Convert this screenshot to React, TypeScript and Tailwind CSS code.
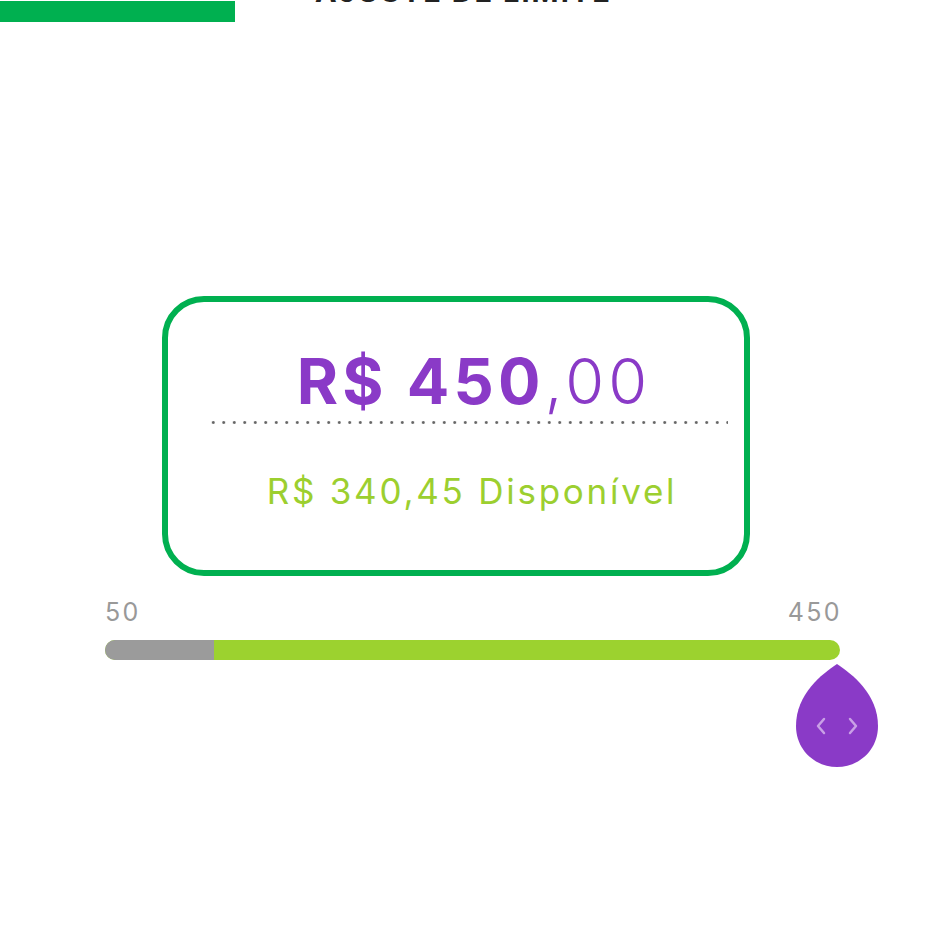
import React from "react";

export default function App() {
  const font = { fontFamily: "Inter, 'Noto Sans', sans-serif" };
  return (
    <div className="w-[945px] h-[945px] bg-white overflow-hidden relative" style={font}>
      {/* header remnants */}
      <div className="flex items-start h-[40px]">
        <div className="w-[235px] h-[21px] mt-[1px] bg-[#00b050]" />
        <div className="ml-[80px] -mt-[22px] text-[29px] leading-[28px] font-bold text-[#222] tracking-[2px] whitespace-nowrap">
          AJUSTE DE LIMITE
        </div>
      </div>

      {/* card */}
      <div className="mt-[256px] ml-[162px] w-[588px] h-[280px] border-[6px] border-[#00b050] rounded-[42px] flex flex-col items-center pl-[28px]">
        <div className="mt-[44px] ml-[8px] text-[63px] leading-[70px] text-[#8a3ac7] tracking-[4.2px] whitespace-nowrap">
          <span className="font-bold">R$ 450</span>
          <span className="font-light">,00</span>
        </div>
        <div className="mt-[5px] ml-[-4px] w-[520px] h-[3px] bg-[radial-gradient(circle,#666_1.2px,transparent_1.6px)] bg-[length:10.5px_3px]" />
        <div className="mt-[47px] ml-[4px] text-[35px] leading-[40px] text-[#9ccf2f] font-normal tracking-[2.75px] whitespace-nowrap">
          R$ 340,45 Disponível
        </div>
      </div>

      {/* slider */}
      <div className="ml-[105px] w-[735px] mt-[22px]">
        <div className="flex justify-between text-[25px] leading-[28px] text-[#999] tracking-[2.4px]">
          <span>50</span>
          <span className="mr-[-2px]">450</span>
        </div>
        <div className="mt-[14px] h-[20px] rounded-full bg-[#9cd22f] overflow-hidden flex">
          <div className="w-[109px] h-full bg-[#9b9b9b]" />
        </div>
        <div className="flex justify-end mr-[-38px] mt-[4px]">
          <svg width="82" height="104" viewBox="0 0 82 104">
            <path d="M41 0 C56 10 82 30 82 62 C82 86 63 103 41 103 C19 103 0 86 0 62 C0 30 26 10 41 0 Z" fill="#8a3ac7" />
            <path d="M28 55 L22 62 L28 69" stroke="#c9a0e6" strokeWidth="2.5" fill="none" strokeLinecap="round" strokeLinejoin="round" />
            <path d="M54 55 L60 62 L54 69" stroke="#c9a0e6" strokeWidth="2.5" fill="none" strokeLinecap="round" strokeLinejoin="round" />
          </svg>
        </div>
      </div>
    </div>
  );
}
